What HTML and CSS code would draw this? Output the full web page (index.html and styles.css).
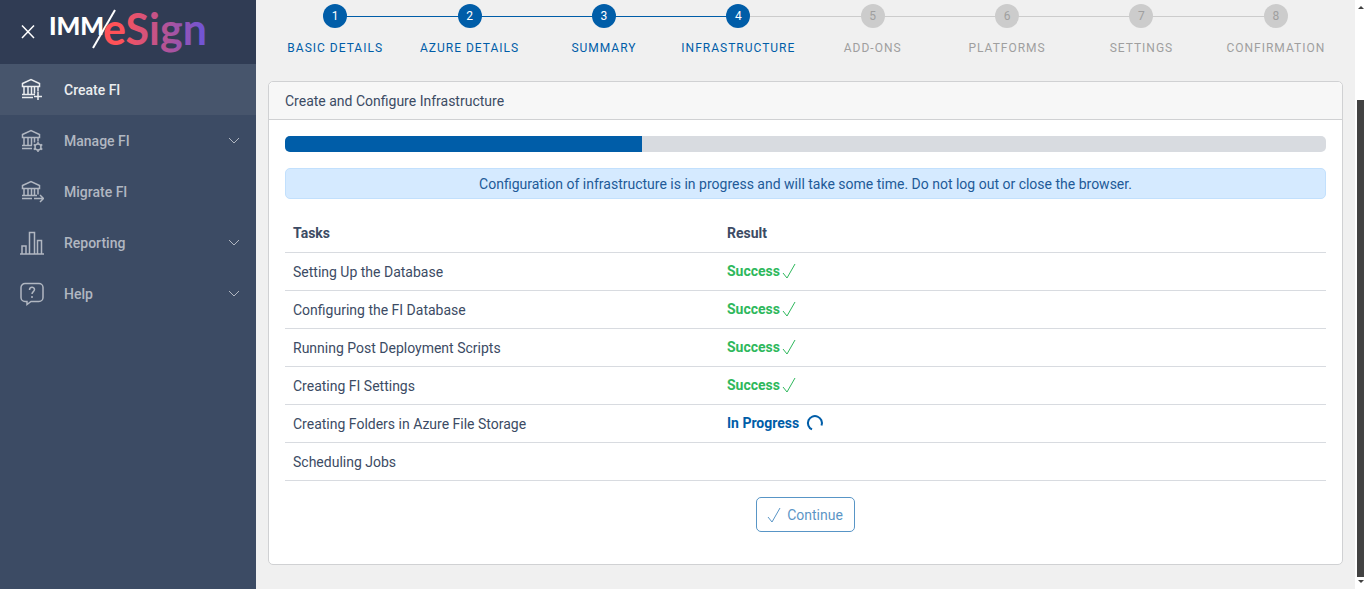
FILE: index.html
```html
<!DOCTYPE html>
<html lang="en">
<head>
  <meta charset="UTF-8">
  <meta name="viewport" content="width=device-width, initial-scale=1.0">
  <title>IMM/eSign - Create FI</title>
  <link rel="stylesheet" href="styles.css">
</head>
<body>

  <aside class="sidebar">
    <div class="brand">
      <button type="button" class="close" aria-label="Close menu">
        <svg width="14" height="14" viewBox="0 0 14 14"><path d="M1 0.500l12 12.500M13 0.500L1 13"/></svg>
      </button>
      <svg class="logo" width="160" height="64" viewBox="0 0 160 64" role="img" aria-label="IMM/eSign">
        <defs>
          <linearGradient id="logoGradient" gradientUnits="userSpaceOnUse" x1="54" y1="0" x2="156" y2="0">
            <stop offset="0.15" stop-color="#ff5258"/>
            <stop offset="0.55" stop-color="#bd538e"/>
            <stop offset="1" stop-color="#6b55d9"/>
          </linearGradient>
        </defs>
        <text class="logo-imm" x="-1" y="35">IMM</text>
        <path class="logo-slash" d="M43 48L65 10"/>
        <text class="logo-esign" x="53" y="45" fill="url(#logoGradient)">eSign</text>
      </svg>
    </div>

    <nav class="menu">
      <a href="#" class="menu-item active">
        <svg class="menu-icon" viewBox="0 0 24 24"><path d="M2.500 5.500L11 1.500l8.500 4v3h-17zM4 8.500v8M8 8.500v8M11.500 8.500v8M14.500 8.500v7M18 8.500v5M2 16.500h13M2 19.500h11M18 14v8M14 18.500h8"/></svg>
        <span>Create FI</span>
      </a>
      <a href="#" class="menu-item">
        <svg class="menu-icon" viewBox="0 0 24 24"><path d="M2.500 5.500L11 1.500l8.500 4v3h-17zM4 8.500v8M8 8.500v8M11.500 8.500v8M14.500 8.500v5M18 8.500v4M2 16.500h10M2 19.500h10"/><circle cx="18" cy="18" r="3"/><path d="M18 13v2M18 21v2M13.700 15.500l1.700 1M20.600 19.500l1.700 1M13.700 20.500l1.700-1M20.600 16.500l1.700-1"/></svg>
        <span>Manage FI</span>
        <svg class="chevron" viewBox="0 0 12 8"><path d="M1 1l5 5 5-5"/></svg>
      </a>
      <a href="#" class="menu-item">
        <svg class="menu-icon" viewBox="0 0 24 24"><path d="M2.500 5.500L11 1.500l8.500 4v3h-17zM4 8.500v7M8 8.500v7M11.500 8.500v7M14.500 8.500v7M18 8.500v6M2 15.500h15M2 18.500h10M14 18.500h9M20 15l3.500 3.500L20 22"/></svg>
        <span>Migrate FI</span>
      </a>
      <a href="#" class="menu-item">
        <svg class="menu-icon" viewBox="0 0 24 24"><path d="M0 23h24M2 23v-8h4v8M9.500 23V1.500h5V23M17.500 23V9.500h4V23"/></svg>
        <span>Reporting</span>
        <svg class="chevron" viewBox="0 0 12 8"><path d="M1 1l5 5 5-5"/></svg>
      </a>
      <a href="#" class="menu-item">
        <svg class="menu-icon" viewBox="0 0 24 24"><path d="M5 1.500h14a4 4 0 0 1 4 4v10a4 4 0 0 1-4 4h-8L7 22.500v-3H5a4 4 0 0 1-4-4v-10a4 4 0 0 1 4-4z"/><path d="M9.500 8c0-3.500 5-3.500 5-.5 0 2.200-2.500 2-2.500 4.500M12 14V16"/></svg>
        <span>Help</span>
        <svg class="chevron" viewBox="0 0 12 8"><path d="M1 1l5 5 5-5"/></svg>
      </a>
    </nav>
  </aside>

  <main class="content">
    <ol class="steps">
      <li class="step done"><span class="step-number">1</span>Basic Details</li>
      <li class="step done"><span class="step-number">2</span>Azure Details</li>
      <li class="step done"><span class="step-number">3</span>Summary</li>
      <li class="step done"><span class="step-number">4</span>Infrastructure</li>
      <li class="step"><span class="step-number">5</span>Add-ons</li>
      <li class="step"><span class="step-number">6</span>Platforms</li>
      <li class="step"><span class="step-number">7</span>Settings</li>
      <li class="step"><span class="step-number">8</span>Confirmation</li>
    </ol>

    <section class="card">
      <header class="card-header">Create and Configure Infrastructure</header>
      <div class="card-body">
        <div class="progress" role="progressbar" aria-label="Progress" aria-valuemin="0" aria-valuemax="100" aria-valuenow="34">
          <div class="progress-bar" style="width: 34.3%"></div>
        </div>

        <div class="alert" role="alert">Configuration of infrastructure is in progress and will take some time. Do not log out or close the browser.</div>

        <table class="tasks">
          <thead>
            <tr>
              <th scope="col">Tasks</th>
              <th scope="col">Result</th>
            </tr>
          </thead>
          <tbody>
            <tr>
              <td>Setting Up the Database</td>
              <td><span class="result success">Success<svg class="check" viewBox="0 0 14 18"><path d="M1 10l4 5 8-14"/></svg></span></td>
            </tr>
            <tr>
              <td>Configuring the FI Database</td>
              <td><span class="result success">Success<svg class="check" viewBox="0 0 14 18"><path d="M1 10l4 5 8-14"/></svg></span></td>
            </tr>
            <tr>
              <td>Running Post Deployment Scripts</td>
              <td><span class="result success">Success<svg class="check" viewBox="0 0 14 18"><path d="M1 10l4 5 8-14"/></svg></span></td>
            </tr>
            <tr>
              <td>Creating FI Settings</td>
              <td><span class="result success">Success<svg class="check" viewBox="0 0 14 18"><path d="M1 10l4 5 8-14"/></svg></span></td>
            </tr>
            <tr>
              <td>Creating Folders in Azure File Storage</td>
              <td><span class="result in-progress">In Progress<svg class="spinner" viewBox="0 0 18 20"><path d="M6 15.400A7 7 0 1 1 15.500 11.500"/></svg></span></td>
            </tr>
            <tr>
              <td>Scheduling Jobs</td>
              <td></td>
            </tr>
          </tbody>
        </table>

        <div class="actions">
          <button type="button" class="btn" disabled><svg class="check" viewBox="0 0 14 18"><path d="M1 10l4 5 8-14"/></svg>Continue</button>
        </div>
      </div>
    </section>
  </main>

  <div class="scrollbar" aria-hidden="true">
    <svg class="arrow" viewBox="0 0 6 4"><path d="M0 4l3-3 3 3z"/></svg>
    <div class="thumb"></div>
    <svg class="arrow" viewBox="0 0 6 4"><path d="M0 0l3 3 3-3z"/></svg>
  </div>

</body>
</html>
```
FILE: styles.css
```css
* {
  box-sizing: border-box;
}

body {
  margin: 0;
  display: flex;
  min-height: 100vh;
  font-family: Roboto, "Liberation Sans", sans-serif;
  font-size: 14px;
  line-height: 21px;
  color: #3c4b64;
  background-color: #f0f0f0;
}

svg {
  flex: none;
  fill: none;
  stroke: currentColor;
}

/* Sidebar */
.sidebar {
  flex: 0 0 256px;
  background-color: #3c4b64;
  color: #fff;
}

.brand {
  display: flex;
  align-items: center;
  gap: 8px;
  height: 64px;
  padding-left: 14px;
  background-color: #303c54;
}

.close {
  display: flex;
  padding: 7px;
  border: none;
  background: none;
  color: #fff;
  stroke-width: 1.5;
  cursor: pointer;
}

.logo {
  stroke: none;
  overflow: visible;
}

.logo-imm {
  font-family: Lato, sans-serif;
  font-size: 25px;
  font-weight: 900;
  fill: #fff;
}

.logo-slash {
  stroke: #fff;
  stroke-width: 2;
}

.logo-esign {
  font-family: Lato, sans-serif;
  font-size: 43px;
  font-weight: 700;
}

.menu-item {
  display: flex;
  align-items: center;
  height: 51px;
  padding: 1px 16px 0 20px;
  color: #b1b7c1;
  font-weight: 500;
  text-decoration: none;
}

.menu-item.active {
  background-color: #47556c;
  color: #ebedef;
}

.menu-icon {
  width: 24px;
  height: 24px;
  margin-right: 20px;
  stroke-width: 1.5;
}

.chevron {
  width: 12px;
  height: 8px;
  margin-left: auto;
}

/* Wizard steps */
.content {
  flex: 1;
  min-width: 0;
  padding: 4px 12px 24px;
}

.steps {
  display: grid;
  grid-template-columns: repeat(8, 1fr);
  margin: 0 0 22px;
  padding: 0;
  list-style: none;
}

.step {
  position: relative;
  display: flex;
  flex-direction: column;
  align-items: center;
  gap: 10px;
  font-size: 12px;
  letter-spacing: 1px;
  text-transform: uppercase;
  color: #9f9f9f;
}

.step-number {
  width: 24px;
  height: 24px;
  border-radius: 50%;
  background-color: #ccc;
  line-height: 24px;
  letter-spacing: 0;
  text-align: center;
  z-index: 1;
}

.step + .step::before {
  content: "";
  position: absolute;
  top: 12px;
  right: 50%;
  width: 100%;
  height: 1px;
  background-color: #ccc;
}

.step.done {
  color: #005da8;
}

.step.done .step-number {
  background-color: #005da8;
  color: #fff;
}

.step.done + .step.done::before {
  background-color: #005da8;
}

/* Card */
.card {
  border: 1px solid #d0d1d3;
  border-radius: 5px;
  background-color: #fff;
}

.card-header {
  padding: 9px 16px 7px;
  border-bottom: 1px solid #d0d1d3;
  border-radius: 5px 5px 0 0;
  background-color: #f7f7f7;
}

.card-body {
  padding: 16px 16px 32px;
}

.progress {
  height: 16px;
  margin-bottom: 16px;
  border-radius: 5px;
  background-color: #d8dbe0;
  overflow: hidden;
}

.progress-bar {
  height: 100%;
  background-color: #005da8;
}

.alert {
  margin-bottom: 16px;
  padding: 5px 16px 3px;
  border: 1px solid #c2e0fd;
  border-radius: 5px;
  background-color: #d5eaff;
  color: #225a98;
  text-align: center;
}

.tasks {
  width: 100%;
  border-collapse: separate;
  border-spacing: 0;
  table-layout: fixed;
}

.tasks th,
.tasks td {
  height: 38px;
  padding: 8px;
  border-bottom: 1px solid #d8dbe0;
  text-align: left;
}

.tasks td:first-child {
  padding: 9px 8px 7px;
}

.tasks th:first-child {
  width: 434px;
}

.result {
  display: flex;
  align-items: center;
  font-weight: 700;
}

.success {
  gap: 2px;
  color: #2eb85c;
}

.in-progress {
  gap: 7px;
  color: #005da8;
}

.check {
  width: 14px;
  height: 18px;
}

.spinner {
  width: 18px;
  height: 20px;
  stroke-width: 2;
}

.actions {
  display: flex;
  justify-content: center;
  padding-top: 16px;
}

.btn {
  display: flex;
  align-items: center;
  gap: 6px;
  padding: 7px 11px 5px 10px;
  border: 1px solid #005da8;
  border-radius: 5px;
  background-color: transparent;
  color: #005da8;
  font: inherit;
  opacity: 0.65;
}

/* Scrollbar */
.scrollbar {
  display: flex;
  flex-direction: column;
  align-items: center;
  flex: 0 0 11px;
  padding: 5px 2px;
  background-color: #fff;
  color: #424242;
}

.thumb {
  flex: 1;
  width: 7px;
  margin: 91px 0 3px;
  background-color: #424242;
}

.arrow {
  width: 6px;
  height: 4px;
  fill: currentColor;
  stroke: none;
}
```
